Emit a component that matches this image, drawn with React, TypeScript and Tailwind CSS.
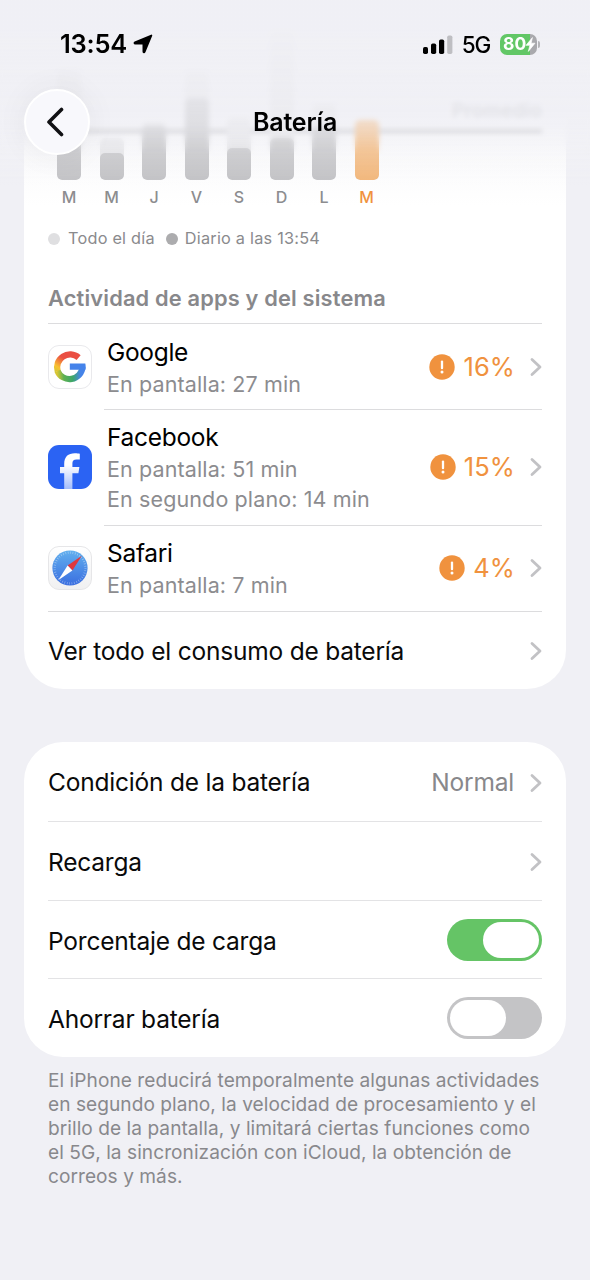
import React, { useState } from 'react';

// ─── data ─────────────────────────────────────────────────────────────────────

const days = [
  { label: 'M', total: 110, used: 72 },
  { label: 'M', total: 42,  used: 27 },
  { label: 'J', total: 58,  used: 54 },
  { label: 'V', total: 108, used: 82 },
  { label: 'S', total: 62,  used: 32 },
  { label: 'D', total: 150, used: 42 },
  { label: 'L', total: 76,  used: 54 },
  { label: 'M', total: 60,  used: 60, today: true },
];

const apps = [
  { name: 'Google',   icon: <GoogleIcon />,   usage: ['En pantalla: 27 min'], percent: '16%' },
  { name: 'Facebook', icon: <FacebookIcon />, usage: ['En pantalla: 51 min', 'En segundo plano: 14 min'], percent: '15%' },
  { name: 'Safari',   icon: <SafariIcon />,   usage: ['En pantalla: 7 min'],  percent: '4%' },
];

// ─── icons ────────────────────────────────────────────────────────────────────

function Chevron() {
  return (
    <svg width="12" height="20" viewBox="0 0 12 20" fill="none" className="shrink-0">
      <path d="M2 2.4 10 10 2 17.6" stroke="#c2c2c5" strokeWidth="2.8" strokeLinecap="round" strokeLinejoin="round" />
    </svg>
  );
}

function GoogleIcon() {
  return (
    <svg width="44" height="44" viewBox="0 0 44 44" fill="none">
      <defs>
        <linearGradient id="g-left" x1="22" y1="8" x2="9" y2="27" gradientUnits="userSpaceOnUse">
          <stop offset="0.35" stopColor="#ea4f43" />
          <stop offset="0.8" stopColor="#f9c230" />
          <stop offset="1" stopColor="#d8c634" />
        </linearGradient>
        <linearGradient id="g-right" x1="9" y1="26" x2="35" y2="25" gradientUnits="userSpaceOnUse">
          <stop offset="0" stopColor="#d8c634" />
          <stop offset="0.25" stopColor="#5fb152" />
          <stop offset="0.6" stopColor="#3ba66a" />
          <stop offset="0.9" stopColor="#4583e8" />
        </linearGradient>
      </defs>
      <rect x="0.5" y="0.5" width="43" height="43" rx="10.5" fill="#fff" stroke="#e9e9ec" />
      <path d="M30.6 12.6A13 13 0 0 0 9.7 26.4" stroke="url(#g-left)" strokeWidth="6.2" />
      <path d="M9.5 26A13 13 0 0 0 34.5 22" stroke="url(#g-right)" strokeWidth="6.2" />
      <path d="M21.8 18.6H37.3C37.8 20.8 37.8 22.8 37.4 24.8H21.8Z" fill="#4583ea" />
    </svg>
  );
}

function FacebookIcon() {
  return (
    <svg width="44" height="44" viewBox="0 0 44 44" fill="none">
      <defs>
        <linearGradient id="fb-f" x1="22" y1="20" x2="22" y2="44" gradientUnits="userSpaceOnUse">
          <stop stopColor="#fff" />
          <stop offset="1" stopColor="#a3bdfb" />
        </linearGradient>
      </defs>
      <rect width="44" height="44" rx="11" fill="#2b63f3" />
      <path
        d="M16.2 44V28.2H12V22H16.2V19C16.2 11.6 20.2 8.2 26.8 8.2C29 8.2 30.8 8.4 31.8 8.7V14.5H28.6C25.4 14.5 24.4 15.8 24.4 18.4V22H31.4L30.4 28.2H24.4V44Z"
        fill="url(#fb-f)"
      />
    </svg>
  );
}

function SafariIcon() {
  return (
    <svg width="44" height="44" viewBox="0 0 44 44" fill="none">
      <defs>
        <linearGradient id="sf-bg" x1="22" y1="0" x2="22" y2="44" gradientUnits="userSpaceOnUse">
          <stop stopColor="#fff" />
          <stop offset="1" stopColor="#f0f0f1" />
        </linearGradient>
        <linearGradient id="sf-dial" x1="22" y1="4" x2="22" y2="39" gradientUnits="userSpaceOnUse">
          <stop stopColor="#62b0ee" />
          <stop offset="1" stopColor="#3b6fe0" />
        </linearGradient>
      </defs>
      <rect x="0.5" y="0.5" width="43" height="43" rx="10.5" fill="url(#sf-bg)" stroke="#e6e6e8" />
      <circle cx="22" cy="22" r="17.6" fill="url(#sf-dial)" />
      <circle cx="22" cy="22" r="15.4" stroke="#fff" strokeOpacity="0.4" strokeWidth="2.2" strokeDasharray="0.7 1.71" />
      <path d="M33.8 9.8 19.6 19.6 24.4 24.4Z" fill="#e0383e" />
      <path d="M10.2 34.2 19.6 19.6 24.4 24.4Z" fill="#fff" />
    </svg>
  );
}

function BatteryIcon() {
  return (
    <div className="flex items-center gap-px">
      <div className="flex h-[21px] w-[37px] items-center overflow-hidden rounded-[7px] bg-[linear-gradient(to_right,#62c766_82%,#a9a9ad_82%)] pl-[3px]">
        <span className="text-[17.5px] leading-none font-bold tracking-[0.1px] text-white">80</span>
        <svg width="11" height="15" viewBox="0 0 10 14" className="-ml-px shrink-0">
          <path d="M6.8 0.5 0.8 7.8H4.4L3 13.5 9.2 5.8H5.6Z" fill="#fff" stroke="#fff" strokeWidth="0.6" strokeLinejoin="round" />
        </svg>
      </div>
      <div className="h-[7px] w-[2px] rounded-r-full bg-[#b5b5b9]" />
    </div>
  );
}

// ─── parts ────────────────────────────────────────────────────────────────────

function Toggle({ on, onChange }: { on: boolean; onChange: () => void }) {
  return (
    <button
      role="switch"
      aria-checked={on}
      onClick={onChange}
      className={`mb-[3px] flex h-[42px] w-[95px] items-center rounded-full px-[3px] ${
        on ? 'justify-end bg-[#65c466]' : 'justify-start bg-[#c4c4c6]'
      }`}
    >
      <span className="h-9 w-14 rounded-full bg-white" />
    </button>
  );
}

function Row({ label, className, children }: { label: string; className: string; children: React.ReactNode }) {
  return (
    <div className={`flex items-center justify-between ${className}`}>
      <span className="text-[24.5px] tracking-[-0.21px] text-[#0a0a0a]">{label}</span>
      {children}
    </div>
  );
}

function Header() {
  return (
    <header className="absolute inset-x-0 top-0 z-10 h-[215px]">
      <div className="absolute inset-x-0 top-0 h-[160px] backdrop-blur-[2.5px] [mask-image:linear-gradient(to_bottom,#000_135px,transparent_155px)]" />
      <div className="absolute inset-0 bg-[linear-gradient(to_bottom,rgba(240,240,245,0.93)_30px,rgba(240,240,245,0.78)_85px,rgba(241,241,246,0.6)_125px,rgba(246,246,249,0.25)_150px,rgba(250,250,252,0)_185px)]" />

      {/* Status bar */}
      <div className="relative flex h-[89px] items-center justify-between pr-[50px] pb-px pl-[60px]">
        <div className="flex items-center gap-[6px]">
          <span className="pt-px text-[25.5px] font-semibold tracking-[-0.2px] text-black">13:54</span>
          <svg width="20" height="20" viewBox="0 0 20 20">
            <path d="M18.4 1.5 11.6 17.8C11.3 18.7 10.4 18.5 10.4 17.6V9.6H2.3C1.3 9.6 1.2 8.7 2 8.3Z" fill="#000" stroke="#000" strokeWidth="1.8" strokeLinejoin="round" />
          </svg>
        </div>
        <div className="flex items-center">
          <svg width="30" height="19" viewBox="0 0 30 19">
            <rect x="0" y="12" width="5" height="7" rx="1.7" />
            <rect x="8" y="8.5" width="5.2" height="10.5" rx="1.7" />
            <rect x="16" y="4.5" width="5.2" height="14.5" rx="1.7" />
            <rect x="24.2" y="0.5" width="5.2" height="18.5" rx="1.7" fill="#bebec2" />
          </svg>
          <span className="ml-[9px] pt-px text-[22.5px] font-medium tracking-[-1.3px] text-black">5G</span>
          <div className="ml-[10px]">
            <BatteryIcon />
          </div>
        </div>
      </div>

      {/* Nav bar */}
      <div className="relative grid h-[66px] grid-cols-[66px_1fr_66px] items-center px-6">
        <button className="flex size-[66px] items-center justify-center rounded-full border-2 border-white bg-[#f8f8fc] pr-1 shadow-[0_0_32px_rgba(0,0,0,0.06)]">
          <svg width="18" height="30" viewBox="0 0 18 30" fill="none">
            <path d="M15.5 2.5 3 15 15.5 27.5" stroke="#111114" strokeWidth="3.6" strokeLinecap="round" strokeLinejoin="round" />
          </svg>
        </button>
        <h1 className="pt-[2px] text-center text-[25px] font-semibold tracking-[-0.15px] text-black">Batería</h1>
      </div>
    </header>
  );
}

function UsageChart() {
  return (
    <div className="relative">
      {/* Average line */}
      <div className="absolute inset-x-0 top-[71px] flex flex-col items-end">
        <span className="text-[19px] leading-[20px] font-semibold tracking-[0.3px] text-[#c4c4c9]">Promedio</span>
        <div className="mt-[8px] h-[4px] w-full bg-[#c3c3c7]" />
      </div>

      <div className="relative flex gap-[18.5px] pl-[9px]">
        {days.map((day, i) => (
          <div key={i} className="flex w-6 flex-col items-center">
            <div className="flex h-[150px] w-full items-end">
              <div
                className="flex w-full items-end overflow-hidden rounded-[5px] bg-[#e4e4e7]"
                style={{ height: day.total }}
              >
                <div
                  className={`w-full rounded-[5px] ${day.today ? 'bg-[#f2b679]' : 'bg-[#c2c2c5]'}`}
                  style={{ height: day.used }}
                />
              </div>
            </div>
            <span className={`text-[16px] leading-[34px] font-medium ${day.today ? 'text-[#f0923e]' : 'text-[#8c8c8f]'}`}>
              {day.label}
            </span>
          </div>
        ))}
      </div>
    </div>
  );
}

// ─── screen ───────────────────────────────────────────────────────────────────

export default function App() {
  const [showPercentage, setShowPercentage] = useState(true);
  const [lowPower, setLowPower] = useState(false);

  return (
    <div className="relative h-[1280px] w-[590px] overflow-hidden bg-[#f0f0f5] px-6 font-['Inter',sans-serif]">
      <Header />

      {/* Usage card */}
      <section className="h-[689px] rounded-b-[39px] bg-[linear-gradient(to_bottom,#f0f0f5_112px,#f6f6f9_138px,#fbfbfc_165px,#fff_205px)] px-6 pt-[30px]">
        <UsageChart />

        <div className="flex h-[49px] items-center text-[16.3px] tracking-[0.22px] text-[#8a8a8d]">
          <span className="mr-2 size-3 rounded-full bg-[#dfdfe1]" />
          Todo el día
          <span className="mr-[7px] ml-[11px] size-3 rounded-full bg-[#acacae]" />
          Diario a las 13:54
        </div>

        <div className="flex h-[61px] items-end border-b border-[#dcdcde] pb-[10px]">
          <h2 className="text-[21.8px] leading-[30px] font-semibold tracking-[0.17px] text-[#88888b]">
            Actividad de apps y del sistema
          </h2>
        </div>

        {apps.map((app, i) => (
          <div key={app.name} className="flex items-center">
            <div className="mr-3 w-11 shrink-0">{app.icon}</div>
            <div
              className={`flex flex-1 items-center justify-between pl-[3px] ${
                i > 0 ? 'border-t border-[#dcdcde] pt-[12px] pb-[11px]' : 'pt-[13px] pb-[10px]'
              }`}
            >
              <div>
                <div className="mb-[2px] text-[24.5px] leading-[30px] tracking-[-0.3px] text-black">{app.name}</div>
                {app.usage.map(line => (
                  <div key={line} className="text-[21.5px] leading-[30px] tracking-[0.12px] text-[#8c8c8f]">{line}</div>
                ))}
              </div>
              <div className="flex items-center pb-[2px] text-[#f0923e]">
                <svg width="26" height="26" viewBox="0 0 26 26" className="mr-2">
                  <circle cx="13" cy="13" r="12.7" fill="#f0923e" />
                  <path d="M13 7.6V14.2" stroke="#fff" strokeWidth="2.3" strokeLinecap="round" />
                  <circle cx="13" cy="18" r="1.5" fill="#fff" />
                </svg>
                <span className="mr-[15px] pt-px text-[25.5px] tracking-[0.1px]">{app.percent}</span>
                <Chevron />
              </div>
            </div>
          </div>
        ))}

        <Row label="Ver todo el consumo de batería" className="h-[79px] border-t border-[#dcdcde]">
          <Chevron />
        </Row>
      </section>

      {/* Settings card */}
      <section className="mt-[53px] h-[315px] rounded-[39px] bg-white px-6">
        <Row label="Condición de la batería" className="h-[80px] border-b border-[#e3e3e5] pt-[2px]">
          <span className="flex items-center gap-4 text-[24.5px] tracking-[-0.2px] text-[#88888b]">
            Normal
            <Chevron />
          </span>
        </Row>
        <Row label="Recarga" className="h-[79px] border-b border-[#e3e3e5] pt-[2px]">
          <Chevron />
        </Row>
        <Row label="Porcentaje de carga" className="h-[78px] border-b border-[#e3e3e5] pt-[3px]">
          <Toggle on={showPercentage} onChange={() => setShowPercentage(!showPercentage)} />
        </Row>
        <Row label="Ahorrar batería" className="h-[78px] pt-[2px]">
          <Toggle on={lowPower} onChange={() => setLowPower(!lowPower)} />
        </Row>
      </section>

      <p className="px-6 pt-[11px] text-[19.1px] leading-6 tracking-[0.05px] whitespace-nowrap text-[#88888c]">
        El iPhone reducirá temporalmente algunas actividades
        <br />
        en segundo plano, la velocidad de procesamiento y el
        <br />
        brillo de la pantalla, y limitará ciertas funciones como
        <br />
        el 5G, la sincronización con iCloud, la obtención de
        <br />
        correos y más.
      </p>
    </div>
  );
}
